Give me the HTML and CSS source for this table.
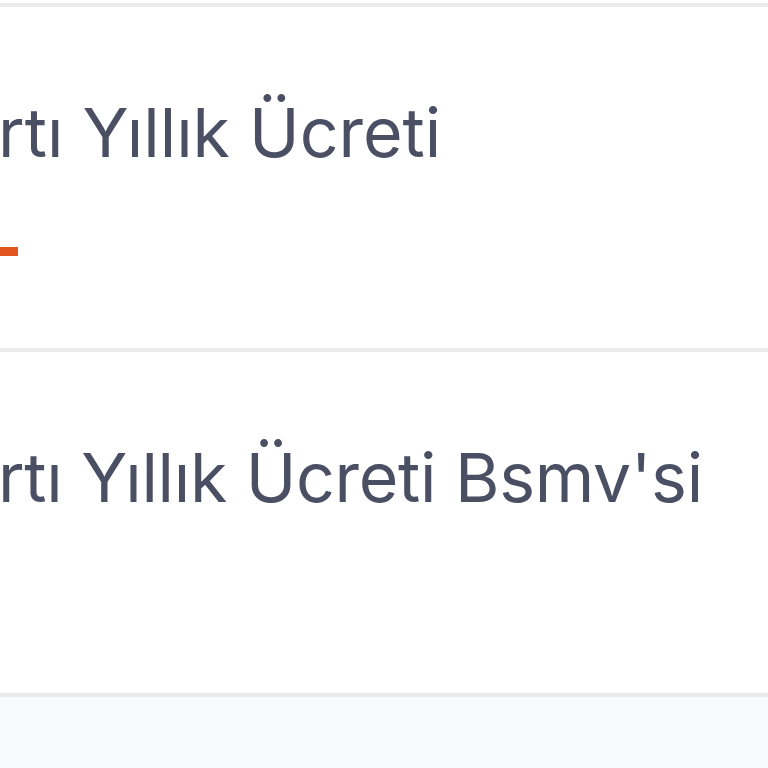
FILE: index.html
```html
<!DOCTYPE html>
<html lang="tr">
<head>
<meta charset="utf-8">
<title>Kart Ücretleri</title>
<link rel="stylesheet" href="styles.css">
</head>
<body>
  <div class="list">
    <div class="row">
      <div class="title">rtı Yıllık Ücreti</div>
      <div class="amount"><span class="dash"></span></div>
    </div>
    <div class="row">
      <div class="title">rtı Yıllık Ücreti Bsmv'si</div>
    </div>
  </div>
  <div class="footer"></div>
</body>
</html>
```

FILE: styles.css
```css
html, body {
  margin: 0;
  padding: 0;
  background: #ffffff;
  overflow: hidden;
}
body {
  width: 768px;
  height: 768px;
  font-family: Inter, "Noto Sans", sans-serif;
  color: #4a4f63;
}
.list {
  padding-top: 3px;
}
.row {
  border-top: 4px solid #ebebeb;
  height: 341px;
  box-sizing: content-box;
  display: flex;
  flex-direction: column;
}
.title {
  margin-left: -2px;
  margin-top: 85px;
  font-size: 68px;
  line-height: 80px;
  white-space: nowrap;
}
.row + .row .title {
  letter-spacing: -0.3px;
}
.amount {
  margin-top: 75px;
  display: flex;
}
.dash {
  display: block;
  width: 18px;
  height: 9px;
  background: #e0561e;
}
.footer {
  border-top: 4px solid #ebebeb;
  background: #f9fafc;
  height: 80px;
}
```
